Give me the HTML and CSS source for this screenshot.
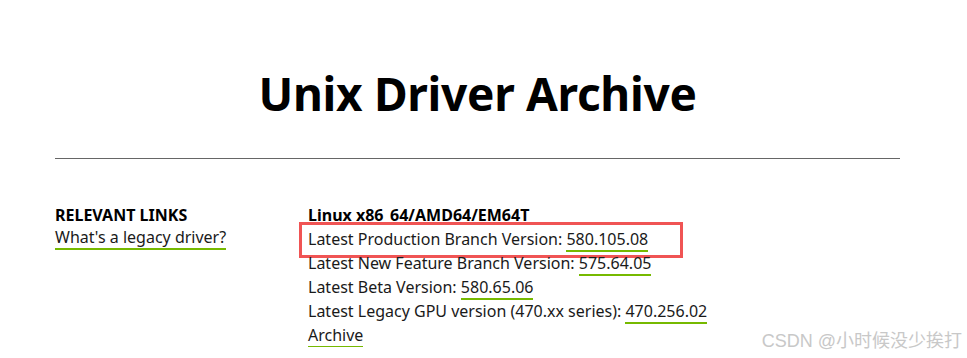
FILE: index.html
```html
<!DOCTYPE html>
<html lang="en">
<head>
    <meta charset="UTF-8">
    <meta name="viewport" content="width=device-width, initial-scale=1.0">
    <title>Unix Driver Archive</title>
    <link rel="stylesheet" href="styles.css">
</head>
<body>
    <div class="page">
        <h1 class="title">Unix Driver Archive</h1>
        <hr class="divider">
        <div class="content">
            <div class="sidebar">
                <h2>RELEVANT LINKS</h2>
                <a class="link" href="#">What's a legacy driver?</a>
            </div>
            <div class="drivers">
                <h2>Linux x86_64/AMD64/EM64T</h2>
                <div class="line marked">Latest Production Branch Version: <a class="link" href="#">580.105.08</a></div>
                <div class="line">Latest New Feature Branch Version: <a class="link" href="#">575.64.05</a></div>
                <div class="line">Latest Beta Version: <a class="link" href="#">580.65.06</a></div>
                <div class="line">Latest Legacy GPU version (470.xx series): <a class="link" href="#">470.256.02</a></div>
                <div class="line"><a class="link" href="#">Archive</a></div>
            </div>
        </div>
    </div>
    <div class="watermark">CSDN @小时候没少挨打</div>
</body>
</html>
```

FILE: styles.css
```css
body {
    margin: 0;
    font-family: "Noto Sans", "Liberation Sans", sans-serif;
    color: #1a1a1a;
    background: #fff;
    overflow: hidden;
}
.page {
    padding: 0 67px 0 55px;
}
.title {
    margin: 66px 0 0;
    font-size: 46px;
    line-height: 55px;
    font-weight: 700;
    color: #000;
    text-align: center;
    letter-spacing: -0.3px;
}
.divider {
    margin: 37px 0 0;
    border: 0;
    border-top: 1px solid #666;
    height: 0;
}
.content {
    display: grid;
    grid-template-columns: 253px 1fr;
    margin-top: 44px;
}
.content h2 {
    margin: 0;
    font-size: 16px;
    line-height: 24px;
    font-weight: 700;
    color: #000;
}
.sidebar,
.drivers {
    display: flex;
    flex-direction: column;
    align-items: flex-start;
    font-size: 16px;
    line-height: 24px;
}
.line {
    position: relative;
}
.link {
    color: #1a1a1a;
    text-decoration: none;
    border-bottom: 2px solid #76b900;
    line-height: 21px;
}
.marked::after {
    content: "";
    position: absolute;
    left: -9px;
    right: -35px;
    top: -5px;
    bottom: -7px;
    border: 3px solid #f05454;
}
.watermark {
    position: absolute;
    right: 5px;
    bottom: 6px;
    font-size: 18px;
    color: #c8c8c8;
    font-family: "Liberation Sans", "Noto Sans CJK SC", sans-serif;
}
```
